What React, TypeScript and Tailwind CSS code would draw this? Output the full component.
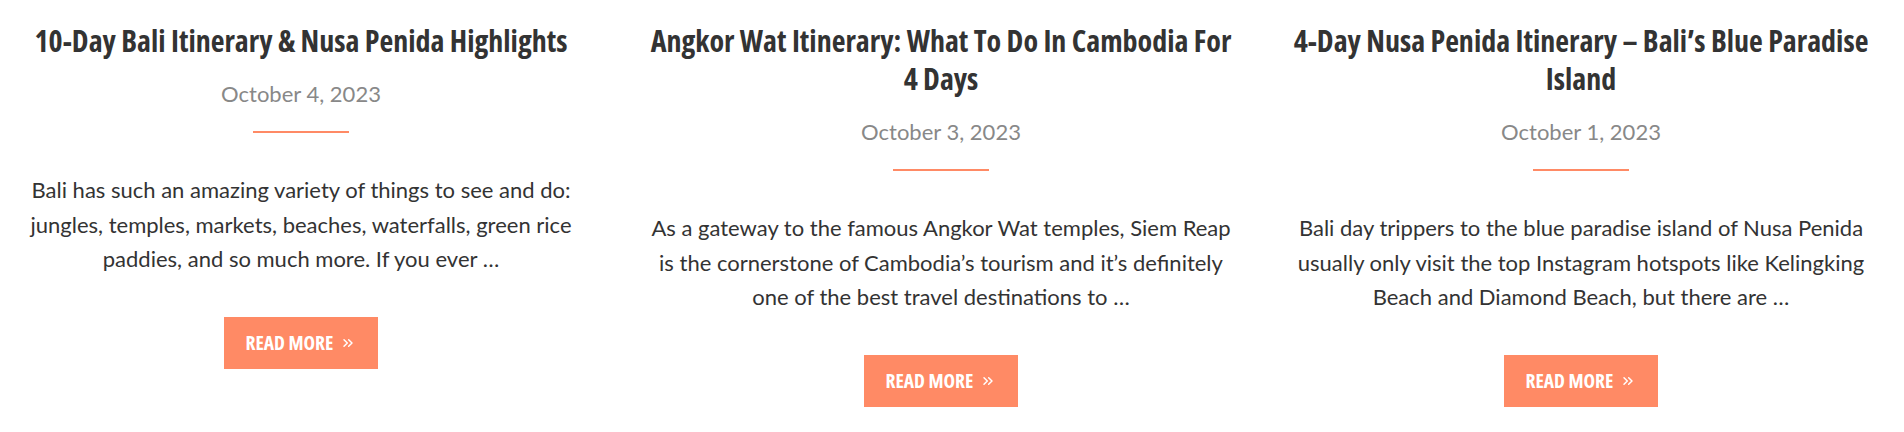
import React from 'react';
import { ChevronsRight } from 'lucide-react';

type Post = {
  title: string;
  date: string;
  excerpt: string;
};

const posts: Post[] = [
  {
    title: '10-Day Bali Itinerary & Nusa Penida Highlights',
    date: 'October 4, 2023',
    excerpt:
      'Bali has such an amazing variety of things to see and do: jungles, temples, markets, beaches, waterfalls, green rice paddies, and so much more. If you ever …',
  },
  {
    title: 'Angkor Wat Itinerary: What To Do In Cambodia For 4 Days',
    date: 'October 3, 2023',
    excerpt:
      'As a gateway to the famous Angkor Wat temples, Siem Reap is the cornerstone of Cambodia’s tourism and it’s definitely one of the best travel destinations to …',
  },
  {
    title: '4-Day Nusa Penida Itinerary – Bali’s Blue Paradise Island',
    date: 'October 1, 2023',
    excerpt:
      'Bali day trippers to the blue paradise island of Nusa Penida usually only visit the top Instagram hotspots like Kelingking Beach and Diamond Beach, but there are …',
  },
];

function PostCard({ post }: { post: Post }) {
  return (
    <article className="flex flex-col items-center text-center">
      <h2 className="font-['Open_Sans',sans-serif] font-bold font-stretch-condensed text-[30px] leading-[38px] text-[#333333]">
        {post.title}
      </h2>
      <div className="mt-[16px] font-['Lato',sans-serif] text-[22px] leading-[36px] text-[#888888]">
        {post.date}
      </div>
      <div className="mt-[19px] h-[2px] w-[96px] bg-[#ff8a65]" />
      <p className="mt-[40px] font-['Lato',sans-serif] text-[22px] leading-[34.6px] text-[#333333]">
        {post.excerpt}
      </p>
      <a
        href="#"
        className="mt-[40px] flex h-[52px] w-[154px] items-center justify-center gap-[7px] bg-[#ff8a65] font-['Open_Sans',sans-serif] font-bold font-stretch-condensed text-[19.5px] uppercase text-white"
      >
        Read More
        <ChevronsRight size={16} strokeWidth={2.2} />
      </a>
    </article>
  );
}

export default function App() {
  return (
    <div className="min-h-[432px] w-full bg-white">
      <div className="ml-[6px] grid grid-cols-[590px_590px_590px] gap-x-[50px] pt-[22px]">
        {posts.map((p) => (
          <PostCard key={p.title} post={p} />
        ))}
      </div>
    </div>
  );
}
